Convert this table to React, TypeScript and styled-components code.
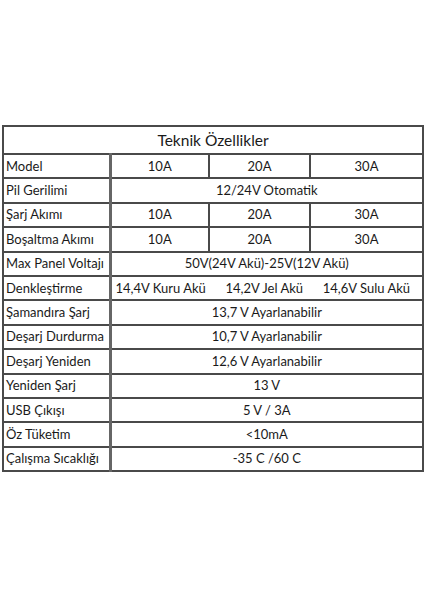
import React from "react";
import styled, { createGlobalStyle } from "styled-components";

const GlobalStyle = createGlobalStyle`
  html, body {
    margin: 0;
    padding: 0;
    background: #ffffff;
  }
  body {
    font-family: Lato, "Open Sans", sans-serif;
    color: #1a1a1a;
  }
`;

type Row = {
  label: string;
  values: string[];
};

const rows: Row[] = [
  { label: "Model", values: ["10A", "20A", "30A"] },
  { label: "Pil Gerilimi", values: ["12/24V Otomatik"] },
  { label: "Şarj Akımı", values: ["10A", "20A", "30A"] },
  { label: "Boşaltma Akımı", values: ["10A", "20A", "30A"] },
  { label: "Max Panel Voltajı", values: ["50V(24V Akü)-25V(12V Akü)"] },
  { label: "Denkleştirme", values: [] },
  { label: "Şamandıra Şarj", values: ["13,7 V Ayarlanabilir"] },
  { label: "Deşarj Durdurma", values: ["10,7 V Ayarlanabilir"] },
  { label: "Deşarj Yeniden", values: ["12,6 V Ayarlanabilir"] },
  { label: "Yeniden Şarj", values: ["13 V"] },
  { label: "USB Çıkışı", values: ["5 V / 3A"] },
  { label: "Öz Tüketim", values: ["<10mA"] },
  { label: "Çalışma Sıcaklığı", values: ["-35 C /60 C"] }
];

const equalization = ["14,4V Kuru Akü", "14,2V Jel Akü", "14,6V Sulu Akü"];

export default function App() {
  return (
    <>
      <GlobalStyle />
      <Page>
        <Table>
          <colgroup>
            <col style={{ width: 107 }} />
            <col style={{ width: 99 }} />
            <col style={{ width: 101 }} />
            <col style={{ width: 113 }} />
          </colgroup>
          <tbody>
            <tr>
              <TitleCell colSpan={4}>Teknik Özellikler</TitleCell>
            </tr>
            {rows.map(r => (
              <tr key={r.label}>
                <LabelCell>{r.label}</LabelCell>
                {r.label === "Denkleştirme" ? (
                  <SpanCell colSpan={3}>
                    <Spread>
                      {equalization.map(e => (
                        <span key={e}>{e}</span>
                      ))}
                    </Spread>
                  </SpanCell>
                ) : r.values.length === 1 ? (
                  <ValueCell colSpan={3}>{r.values[0]}</ValueCell>
                ) : (
                  r.values.map((v, i) => <ValueCell key={i}>{v}</ValueCell>)
                )}
              </tr>
            ))}
          </tbody>
        </Table>
      </Page>
    </>
  );
}

const Page = styled.div`
  width: 424px;
  height: 600px;
  padding: 125px 0 0 2px;
  box-sizing: border-box;
`;

const Table = styled.table`
  width: 421px;
  border-collapse: collapse;
  table-layout: fixed;
  font-size: 13px;

  td {
    border: 2px solid #4a4a4a;
    height: 22.4px;
    padding: 0 3px;
    line-height: 1;
    white-space: nowrap;
  }
`;

const TitleCell = styled.td`
  && {
    height: 24px;
    font-size: 15.5px;
    text-align: center;
    padding-top: 2px;
  }
`;

const LabelCell = styled.td`
  text-align: left;
  && {
    padding-left: 2px;
    border-right-color: #666;
    border-right-width: 3px;
  }
`;

const ValueCell = styled.td`
  text-align: center;
`;

const SpanCell = styled.td`
  && {
    padding: 0 12px 0 4px;
  }
`;

const Spread = styled.div`
  display: flex;
  justify-content: space-between;
`;
